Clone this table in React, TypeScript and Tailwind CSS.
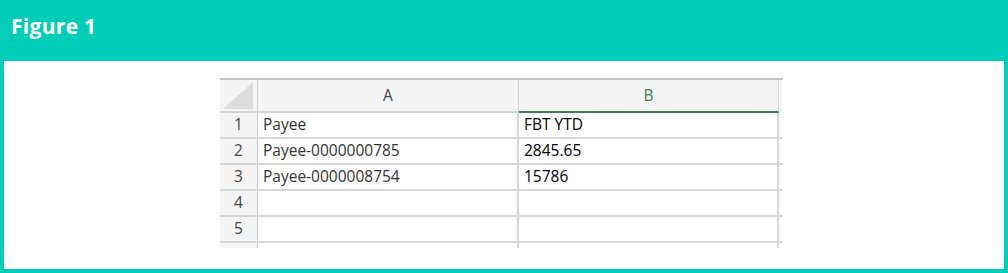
import React from "react";

const rows = [
  { n: "1", a: "Payee", b: "FBT YTD" },
  { n: "2", a: "Payee-0000000785", b: "2845.65" },
  { n: "3", a: "Payee-0000008754", b: "15786" },
  { n: "4", a: "", b: "" },
  { n: "5", a: "", b: "" },
];

export default function App() {
  return (
    <div className="w-[1008px] h-[273px] bg-[#00cdb7] flex flex-col px-[4px] pb-[4px]">
      {/* title bar */}
      <div
        className="h-[61px] flex items-center pl-[7px] pb-[7px] text-white text-[21px] font-bold tracking-[0.3px]"
        style={{ fontFamily: "'Open Sans', sans-serif" }}
      >
        Figure 1
      </div>

      {/* sheet */}
      <div className="flex-1 bg-white pt-[17px] pl-[216px]">
        <div
          className="w-[563px] text-[15.5px]"
          style={{ fontFamily: "'Open Sans', sans-serif" }}
        >
          {/* header row */}
          <div className="flex h-[35px] border-t-2 border-[#c4c4c4] bg-[#f4f4f4]">
            <div className="w-[38px] border-r border-b-2 border-[#d4d4d4] flex items-end justify-end pr-[4px] pb-[2px]">
              <svg width="30" height="27" viewBox="0 0 30 27">
                <polygon points="30,0 30,27 0,27" fill="#dcdcdc" />
              </svg>
            </div>
            <div className="w-[261px] border-r border-b-2 border-[#d4d4d4] flex items-center justify-center text-[#444]">
              A
            </div>
            <div className="w-[260px] border-r border-[#d4d4d4] border-b-2 border-b-[#3c7d50] flex items-center justify-center text-[#3c7d50]">
              B
            </div>
          </div>

          {rows.map((r) => (
            <div key={r.n} className="flex h-[26px] border-b-2 border-[#d6d6d6]">
              <div className="w-[38px] bg-[#f4f4f4] border-r border-[#c8c8c8] flex items-center justify-center text-[#444]">
                {r.n}
              </div>
              <div className="w-[261px] border-r-2 border-[#d6d6d6] flex items-center pl-[5px] text-[#333]">
                {r.a}
              </div>
              <div className="w-[260px] border-r-2 border-[#d6d6d6] flex items-center pl-[5px] text-black">
                {r.b}
              </div>
            </div>
          ))}
          <div className="flex h-[5px]">
            <div className="w-[38px] bg-[#f6f6f6] border-r border-[#c8c8c8]" />
            <div className="w-[261px] border-r-2 border-[#d6d6d6]" />
            <div className="w-[260px] border-r-2 border-[#d6d6d6]" />
          </div>
        </div>
      </div>
    </div>
  );
}
